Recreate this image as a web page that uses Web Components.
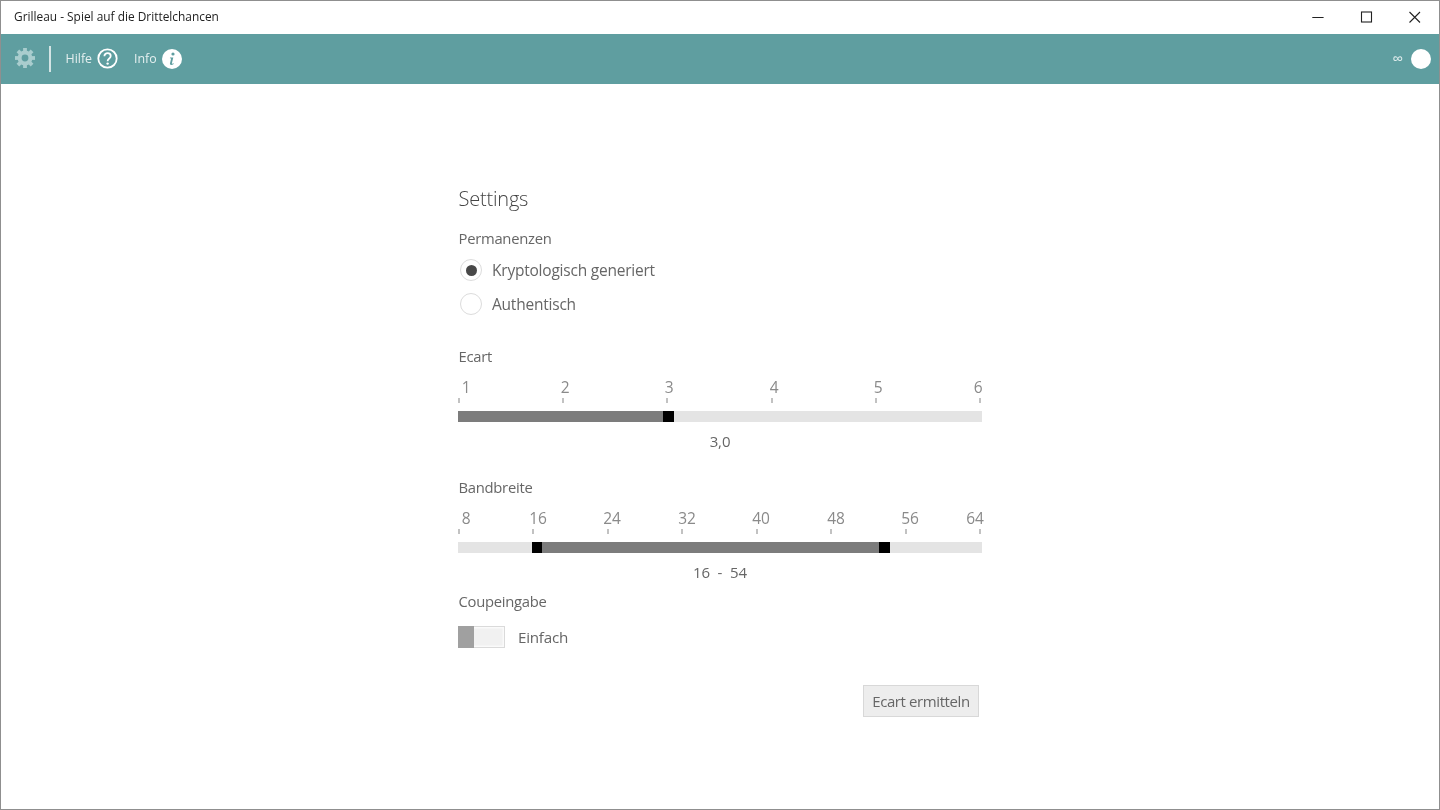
<!DOCTYPE html>
<html lang="de"><head><meta charset="utf-8"><title>Grilleau</title>
<style>
html,body{margin:0;padding:0;background:#fff}
body{font-family:"Open Sans","Noto Sans",sans-serif;color:#666}
</style></head>
<body>
<app-window>
  <title-bar slot="title" text="Grilleau - Spiel auf die Drittelchancen"></title-bar>
  <tool-bar slot="toolbar"></tool-bar>
  <settings-panel>
    <h-line size="h">Settings</h-line>
    <h-line style="margin-top:16px;margin-bottom:4px">Permanenzen</h-line>
    <radio-row checked>Kryptologisch generiert</radio-row>
    <radio-row>Authentisch</radio-row>
    <h-line style="margin-top:26px">Ecart</h-line>
    <range-slider labels="1,2,3,4,5,6" centers="8,107,211,316,420,520" segs="fill:205,thumb:11,empty:*" value="3,0"></range-slider>
    <h-line style="margin-top:27px">Bandbreite</h-line>
    <range-slider labels="8,16,24,32,40,48,56,64" centers="8,80,154,229,303,378,452,517" segs="empty:74,thumb:10,fill:337,thumb:11,empty:*" value="16  -  54"></range-slider>
    <h-line style="margin-top:10px">Coupeingabe</h-line>
    <toggle-row>Einfach</toggle-row>
    <action-button>Ecart ermitteln</action-button>
  </settings-panel>
</app-window>
<script>
function def(name,css,html){
  customElements.define(name,class extends HTMLElement{
    connectedCallback(){
      if(this.shadowRoot)return;
      const r=this.attachShadow({mode:'open'});
      r.innerHTML='<style>'+css+'</style>'+(typeof html==='function'?html(this):html);
    }
  });
}
def('app-window',`:host{display:flex;flex-direction:column;box-sizing:border-box;width:1440px;height:810px;border:1px solid #8f8f8f;overflow:hidden;background:#fff;filter:blur(.3px)}
main{flex:1;display:flex;justify-content:center;min-height:0}`,
`<slot name="title"></slot><slot name="toolbar"></slot><main><slot></slot></main>`);

def('title-bar',`:host{display:flex;align-items:center;height:33px;flex:none;background:#fff}
.t{flex:1;padding-left:13px;font:400 11.9px/31px "Open Sans",sans-serif;color:#222;padding-bottom:2px}
.b{width:48px;height:33px;display:flex;align-items:center;justify-content:center}
svg{display:block}`,
h=>`<div class="t">${h.getAttribute('text')}</div>
<div class="b"><svg width="14" height="14" viewBox="0 0 14 14"><path d="M0.3 6.5H11.6" stroke="#222" stroke-width="1" fill="none"/></svg></div>
<div class="b"><svg width="14" height="14" viewBox="0 0 14 14"><rect x="1.5" y="1" width="10" height="10" stroke="#222" stroke-width="1.1" fill="none"/></svg></div>
<div class="b"><svg width="14" height="14" viewBox="0 0 14 14"><path d="M1.5 1L12 11.5M12 1L1.5 11.5" stroke="#222" stroke-width="1.1" fill="none"/></svg></div>`);

const teeth=[0,45,90,135,180,225,270,315].map(a=>`<rect x="8.1" y="0" width="3.8" height="4.2" transform="rotate(${a} 10 10)"/>`).join('');
def('tool-bar',`:host{display:flex;align-items:center;height:50px;flex:none;background:#5f9ea0;color:#e4efef;font:400 12.4px "Open Sans",sans-serif}
svg{display:block;flex:none}
.div{width:1.5px;height:26px;background:#d3e4e4;margin:0 15px 0 14px}
.sp{flex:1}
.lbl{white-space:nowrap;padding-bottom:2px}`,
`<svg style="margin-left:14px;margin-bottom:2px" width="20" height="20" viewBox="0 0 20 20" fill="#a9cdce"><circle cx="10" cy="10" r="5.4" fill="none" stroke="#a9cdce" stroke-width="4"/>${teeth}</svg>
<div class="div"></div>
<span class="lbl">Hilfe</span>
<svg style="margin-left:5px;margin-bottom:1px" width="21" height="21" viewBox="0 0 21 21"><circle cx="10.5" cy="10.5" r="9.2" fill="none" stroke="#fff" stroke-width="1.8"/><path d="M7.4 8.2C7.4 6.4 8.8 5.2 10.6 5.2C12.4 5.2 13.7 6.4 13.7 8C13.7 9.3 13 10 12 10.7C11 11.4 10.6 12 10.6 13.2" fill="none" stroke="#fff" stroke-width="1.8"/><circle cx="10.6" cy="15.6" r="1.2" fill="#fff"/></svg>
<span class="lbl" style="margin-left:16px">Info</span>
<svg style="margin-left:5px;margin-bottom:1px" width="20" height="20" viewBox="0 0 20 20"><circle cx="10" cy="10" r="10" fill="#fff"/><circle cx="11" cy="5" r="1.6" fill="#5f9ea0"/><path d="M8 8.5H11.3L9.9 14.2C9.8 14.8 10.3 15 11.6 14.3L11.7 15C10.4 16 8.8 16.2 8.2 15.6C7.8 15.2 7.9 14.6 8 14.2L9 10C9.1 9.4 8.7 9.2 7.9 9.2Z" fill="#5f9ea0"/></svg>
<div class="sp"></div>
<span class="lbl" style="font-size:15px;margin-right:8px;color:#e4efef">∞</span>
<svg style="margin-right:8px;margin-bottom:1px" width="20" height="20" viewBox="0 0 20 20"><circle cx="10" cy="10" r="10" fill="#fff"/></svg>`);

def('settings-panel',`:host{display:flex;flex-direction:column;width:524px;padding-top:99px;box-sizing:border-box}`,`<slot></slot>`);

def('h-line',`:host{display:block;font:400 14.8px/18px "Open Sans",sans-serif;padding:0 0 2px .5px;color:#666;letter-spacing:-.27px}
:host([size=h]){font:300 20px/28px "Open Sans",sans-serif;padding:2px 0 0 .5px;color:#444;letter-spacing:-.2px}`,`<slot></slot>`);

def('radio-row',`:host{display:flex;align-items:center;height:34px;padding-left:2px;font:400 15.5px/20px "Open Sans",sans-serif;color:#666;letter-spacing:-.22px}
.c{box-sizing:border-box;width:22px;height:22px;border-radius:50%;border:1.5px solid #dcdcdc;margin-right:10px;display:flex;align-items:center;justify-content:center;flex:none}
:host([checked]) .c::after{content:"";width:11px;height:11px;border-radius:50%;background:#484848}`,
`<span class="c"></span><slot></slot>`);

def('range-slider',`:host{display:block;width:524px}
.labels{display:flex;height:20px;margin-top:10px;font:400 15.5px/20px "Open Sans",sans-serif;color:#8a8a8a;letter-spacing:-.2px}
.labels span{flex:none;width:30px;text-align:center}
.ticks{display:flex;justify-content:space-between;height:6px;margin-top:1px;padding-right:1px}
.ticks i{display:block;width:2px;height:5px;background:#c2c2c2}
.track{display:flex;height:11px;margin-top:7px;background:#e4e4e4}
.fill{background:#7c7c7c}.thumb{background:#000}
.val{height:20px;margin-top:9px;text-align:center;font:400 15px/20px "Open Sans",sans-serif;color:#666;white-space:pre;letter-spacing:-.1px}`,
h=>{
  const L=h.getAttribute('labels').split(','),C=h.getAttribute('centers').split(',').map(Number);
  let prev=0;
  const labels=L.map((t,i)=>{const ml=C[i]-15-prev;prev=C[i]+15;return `<span style="margin-left:${ml}px">${t}</span>`}).join('');
  const ticks=L.map(()=>'<i></i>').join('');
  const segs=h.getAttribute('segs').split(',').map(s=>{const [k,w]=s.split(':');return `<div class="${k}" style="${w==='*'?'flex:1':'flex:none;width:'+w+'px'}"></div>`}).join('');
  return `<div class="labels">${labels}</div><div class="ticks">${ticks}</div><div class="track">${segs}</div><div class="val">${h.getAttribute('value')}</div>`;
});

def('toggle-row',`:host{display:flex;align-items:center;height:22px;margin-top:14px;font:400 15.2px/20px "Open Sans",sans-serif;color:#666;letter-spacing:-.25px}
.sw{box-sizing:border-box;flex:none;display:flex;width:47px;height:22px;border:1px solid #dadada;background:#f1f1f1;box-shadow:inset 0 0 0 1.5px #fafafa;margin-right:13px}
.k{width:16px;margin:-1px 0 -1px -1px;background:#a0a0a0}`,
`<span class="sw"><span class="k"></span></span><slot></slot>`);

def('action-button',`:host{display:flex;justify-content:center;align-items:center;align-self:flex-end;box-sizing:border-box;width:116px;height:32px;margin:37px 3px 0 0;background:#ededed;border:1.5px solid #d8d8d8;font:400 15px/20px "Open Sans",sans-serif;color:#666;letter-spacing:-.4px}`,`<slot></slot>`);
</script>
</body></html>
